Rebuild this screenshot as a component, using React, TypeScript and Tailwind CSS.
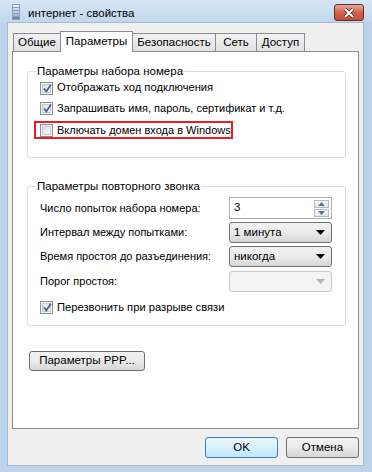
import React from "react";

const font = "font-['Liberation_Sans',Arial,sans-serif]";

function CheckBox({ checked }: { checked?: boolean }) {
  return (
    <span className="relative w-[13px] h-[13px] shrink-0 border border-[#8e8f8f] bg-[#f4f4f4] flex items-center justify-center">
      <span className="w-[9px] h-[9px] border border-[#c8cbd0] bg-gradient-to-br from-[#d9dce0] to-[#fbfbfb]" />
      {checked && (
        <svg className="absolute left-[1px] top-[0px]" width="11" height="11" viewBox="0 0 11 11">
          <path d="M2 5.5 L4.3 8.5 L9 1.5" fill="none" stroke="#4a5f97" strokeWidth="1.8" />
        </svg>
      )}
    </span>
  );
}

function Arrow({ color = "#000" }: { color?: string }) {
  return (
    <svg width="9" height="5" viewBox="0 0 9 5">
      <path d="M0 0 H9 L4.5 5 Z" fill={color} />
    </svg>
  );
}

function Combo({ value, disabled }: { value?: string; disabled?: boolean }) {
  return (
    <div
      className={
        disabled
          ? "w-[103px] h-[21px] rounded-[3px] border border-[#c9c9c9] bg-[#f4f4f4] flex items-center justify-end pr-[6px]"
          : "w-[103px] h-[21px] rounded-[3px] border border-[#707070] bg-gradient-to-b from-[#f2f2f2] via-[#ebebeb] to-[#d6d6d6] flex items-center justify-between pl-[4px] pr-[6px]"
      }
    >
      {value && <span className="text-[11.5px] leading-none text-black">{value}</span>}
      <Arrow color={disabled ? "#b8b8b8" : "#000"} />
    </div>
  );
}

function Spin({ value }: { value: string }) {
  return (
    <div className="w-[103px] h-[22px] border border-[#abadb3] bg-white flex items-center justify-between pl-[4px] pr-[2px]">
      <span className="text-[11.5px] leading-none">{value}</span>
      <div className="flex flex-col gap-[1px]">
        <div className="w-[15px] h-[8px] border border-[#b4b8c0] bg-gradient-to-b from-[#fafafa] to-[#e3e5e9] flex items-center justify-center">
          <svg width="7" height="4" viewBox="0 0 7 4">
            <path d="M0 4 H7 L3.5 0 Z" fill="#5d6f97" />
          </svg>
        </div>
        <div className="w-[15px] h-[8px] border border-[#b4b8c0] bg-gradient-to-b from-[#fafafa] to-[#e3e5e9] flex items-center justify-center">
          <svg width="7" height="4" viewBox="0 0 7 4">
            <path d="M0 0 H7 L3.5 4 Z" fill="#5d6f97" />
          </svg>
        </div>
      </div>
    </div>
  );
}

function Row({ label, children, className }: { label: string; children: React.ReactNode; className: string }) {
  return (
    <div className={`flex items-center pl-[12px] ${className}`}>
      <span className="w-[189px] text-[11px] leading-none whitespace-nowrap">{label}</span>
      {children}
    </div>
  );
}

const tabs = [
  { name: "Общие", w: "w-[48px]" },
  { name: "Параметры", w: "w-[73px]" },
  { name: "Безопасность", w: "w-[84px]" },
  { name: "Сеть", w: "w-[42px]" },
  { name: "Доступ", w: "w-[49px]" },
];

export default function App() {
  return (
    <div className={`w-[372px] h-[472px] bg-[#bcd3ea] flex flex-col text-black text-[12px] ${font}`}>
      {/* title bar */}
      <div className="h-[22px] flex items-start bg-gradient-to-b from-[#d6e5f5] to-[#c2d7ed]">
        <svg className="ml-[12px] mt-[4px]" width="8" height="16" viewBox="0 0 8 16">
          <rect x="0" y="0" width="8" height="16" fill="#8aa0bd" />
          <rect x="1" y="1" width="6" height="2" fill="#e8eef6" />
          <rect x="1" y="4" width="6" height="2" fill="#d4deea" />
          <rect x="1" y="7" width="6" height="2" fill="#c2cfe0" />
          <rect x="1" y="10" width="6" height="2" fill="#aebfd5" />
          <rect x="1" y="13" width="6" height="2" fill="#6f89ad" />
        </svg>
        <span className="ml-[8px] mt-[8px] text-[11.5px] leading-none whitespace-nowrap">интернет - свойства</span>
        <div className="ml-auto mr-[8px] mt-[4px] w-[30px] h-[17px] rounded-[3px] border border-[#6d2d2d] bg-gradient-to-b from-[#e8a89a] via-[#d0614d] to-[#c1503b] flex items-center justify-center">
          <svg width="12" height="10" viewBox="0 0 12 10">
            <path d="M2 1 L10 9 M10 1 L2 9" stroke="#4a2020" strokeWidth="3.4" />
            <path d="M2 1 L10 9 M10 1 L2 9" stroke="#fff" strokeWidth="2" />
          </svg>
        </div>
      </div>

      {/* client area */}
      <div className="ml-[7px] mr-[8px] mb-[6px] flex-1 bg-[#f0f0f0] border border-[#a5bbd3] flex flex-col text-[11px]">
        {/* tabs */}
        <div className="mt-[8px] ml-[5px] h-[20px] flex items-end relative z-10">
          {tabs.map((t) =>
            t.name === "Параметры" ? (
              <div
                key={t.name}
                className={`${t.w} h-[21px] -mb-px -ml-px bg-white border border-b-0 border-[#898c95] flex items-center justify-center text-[11.5px] leading-none`}
              >
                {t.name}
              </div>
            ) : (
              <div
                key={t.name}
                className={`${t.w} h-[18px] -ml-px first:ml-0 bg-gradient-to-b from-[#f2f2f2] to-[#e0e0e0] border border-b-0 border-[#898c95] flex items-center justify-center text-[11.5px] leading-none`}
              >
                {t.name}
              </div>
            )
          )}
        </div>

        {/* panel */}
        <div className="ml-[4px] w-[347px] h-[378px] bg-white border border-[#898c95] flex flex-col">
          <fieldset className="mt-[12px] ml-[14px] w-[319px] border border-[#d5dfe5] rounded-[3px] pb-[18px]">
            <legend className="ml-[8px] px-[1px] text-[11.5px] leading-[14px]">Параметры набора номера</legend>
            <div className="flex items-center gap-[4px] pl-[12px] h-[20px]">
              <CheckBox checked />
              <span className="text-[11.2px] leading-none whitespace-nowrap">Отображать ход подключения</span>
            </div>
            <div className="flex items-center gap-[4px] pl-[12px] h-[20px]">
              <CheckBox checked />
              <span className="text-[11px] leading-none whitespace-nowrap">Запрашивать имя, пароль, сертификат и т.д.</span>
            </div>
            <div className="ml-[6px] mt-[3px] w-[199px] h-[18px] border-2 border-[#ec1c24] flex items-center gap-[4px] pl-[4px]">
              <CheckBox />
              <span className="text-[11px] leading-none whitespace-nowrap">Включать домен входа в Windows</span>
            </div>
          </fieldset>

          <fieldset className="mt-[21px] ml-[14px] w-[319px] border border-[#d5dfe5] rounded-[3px] pb-[8px]">
            <legend className="ml-[8px] px-[1px] text-[11.5px] leading-[14px]">Параметры повторного звонка</legend>
            <Row label="Число попыток набора номера:" className="mt-[4px]">
              <Spin value="3" />
            </Row>
            <Row label="Интервал между попытками:" className="mt-[3px]">
              <Combo value="1 минута" />
            </Row>
            <Row label="Время простоя до разъединения:" className="mt-[3px]">
              <Combo value="никогда" />
            </Row>
            <Row label="Порог простоя:" className="mt-[4px]">
              <Combo disabled />
            </Row>
            <div className="mt-[6px] h-[19px] flex items-center gap-[4px] pl-[12px]">
              <CheckBox checked />
              <span className="text-[11.2px] leading-none whitespace-nowrap">Перезвонить при разрыве связи</span>
            </div>
          </fieldset>

          <button className="mt-[25px] ml-[16px] w-[116px] h-[20px] rounded-[3px] border border-[#707070] bg-gradient-to-b from-[#f2f2f2] via-[#ebebeb] to-[#d6d6d6] text-[11.5px] leading-none">
            Параметры PPP...
          </button>
        </div>

        {/* bottom buttons */}
        <div className="mt-[8px] mr-[4px] flex justify-end gap-[8px]">
          <button className="w-[73px] h-[21px] rounded-[3px] border border-[#3c7fb1] bg-gradient-to-b from-[#eaf6fd] via-[#d9f0fc] to-[#bee6fd] text-[11.5px] leading-none">
            OK
          </button>
          <button className="w-[73px] h-[21px] rounded-[3px] border border-[#707070] bg-gradient-to-b from-[#f2f2f2] via-[#ebebeb] to-[#d6d6d6] text-[11.5px] leading-none">
            Отмена
          </button>
        </div>
      </div>
    </div>
  );
}
